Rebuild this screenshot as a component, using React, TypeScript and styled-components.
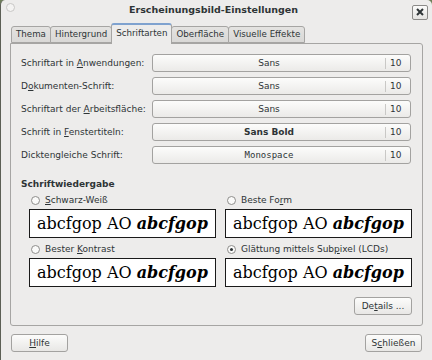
import styled, { createGlobalStyle } from 'styled-components'

const GlobalStyle = createGlobalStyle`
  html, body {
    margin: 0;
    padding: 0;
    background: #6f7f5a;
  }
  body {
    font-family: "DejaVu Sans", "Liberation Sans", sans-serif;
    font-size: 9px;
    color: #2e3436;
  }
`

const Window = styled.div`
  width: 432px;
  height: 360px;
  box-sizing: border-box;
  background: #edeceb;
  border-left: 1px solid #5c5f55;
  border-radius: 5px 5px 0 0;
  display: flex;
  flex-direction: column;
  overflow: hidden;
`

const TitleBar = styled.div`
  height: 21px;
  display: flex;
  align-items: center;
  padding: 0 4px 0 5px;
  flex-shrink: 0;
`

const Dot = styled.div`
  width: 7px;
  height: 7px;
  border-radius: 50%;
  border: 1px solid #c8c7c5;
  background: #f4f3f2;
  margin-top: -6px;
`

const Title = styled.div`
  flex: 1;
  text-align: center;
  font-weight: bold;
  font-size: 9.5px;
  color: #2e3436;
  margin-top: -3px;
`

const CloseButton = styled.div`
  width: 14px;
  height: 13px;
  border: 1px solid #8b8a88;
  border-radius: 2px;
  background: linear-gradient(#fbfbfa, #e4e3e1);
  display: flex;
  align-items: center;
  justify-content: center;
  margin-top: 3px;
`

const Content = styled.div`
  flex: 1;
  display: flex;
  flex-direction: column;
  padding: 0 9px 8px 9px;
`

const TabRow = styled.div`
  display: flex;
  align-items: flex-end;
  padding-left: 2px;
  height: 22px;
  position: relative;
  z-index: 1;
`

const Tab = styled.div<{ $active?: boolean }>`
  height: ${(p) => (p.$active ? '21px' : '17px')};
  box-sizing: border-box;
  padding: ${(p) => (p.$active ? '3px 4px 0' : '2px 4px 0')};
  border: 1px solid #a6a5a3;
  border-bottom: ${(p) => (p.$active ? 'none' : '1px solid #a6a5a3')};
  border-top: ${(p) => (p.$active ? '2px solid #7fa2cf' : '1px solid #a6a5a3')};
  border-radius: 3px 3px 0 0;
  margin-left: -1px;
  background: ${(p) => (p.$active ? '#edeceb' : 'linear-gradient(#e4e3e1, #d9d8d6)')};
  color: #2e3436;
  font-size: 8.7px;
  white-space: nowrap;
  margin-bottom: ${(p) => (p.$active ? '-1px' : '0')};
`

const Panel = styled.div`
  flex: 1;
  border: 1px solid #a6a5a3;
  border-radius: 0 3px 3px 3px;
  padding: 10px 10px 10px 10px;
  display: flex;
  flex-direction: column;
`

const FontGrid = styled.div`
  display: grid;
  grid-template-columns: 131px 1fr;
  row-gap: 5px;
  align-items: center;
`

const FieldLabel = styled.div`
  font-size: 9px;
`

const FontButton = styled.div`
  height: 18px;
  box-sizing: border-box;
  border: 1px solid #a3a2a0;
  border-radius: 3px;
  background: linear-gradient(#fcfcfb, #ebeae8);
  display: flex;
  align-items: center;
  margin-right: 1px;
`

const FontName = styled.div<{ $bold?: boolean; $mono?: boolean }>`
  flex: 1;
  text-align: center;
  font-weight: ${(p) => (p.$bold ? 'bold' : 'normal')};
  font-family: ${(p) => (p.$mono ? '"DejaVu Sans Mono", monospace' : 'inherit')};
`

const FontSize = styled.div`
  width: 20px;
  border-left: 1px solid #c9c8c6;
  padding-left: 4px;
  line-height: 11px;
`

const SectionTitle = styled.div`
  font-weight: bold;
  margin-top: 15px;
`

const RenderGrid = styled.div`
  display: grid;
  grid-template-columns: 1fr 1fr;
  column-gap: 9px;
  row-gap: 5px;
  padding-left: 8px;
  margin-top: 5px;
`

const Option = styled.div`
  display: flex;
  flex-direction: column;
  gap: 3px;
`

const RadioLine = styled.div`
  display: flex;
  align-items: center;
  gap: 5px;
  height: 12px;
  padding-left: 2px;
`

const Radio = styled.div<{ $checked?: boolean }>`
  width: 7px;
  height: 7px;
  border-radius: 50%;
  border: 1px solid #8e8d8b;
  background: #fafaf9;
  display: flex;
  align-items: center;
  justify-content: center;
  &::after {
    content: '';
    display: ${(p) => (p.$checked ? 'block' : 'none')};
    width: 3px;
    height: 3px;
    border-radius: 50%;
    background: #2e3436;
  }
`

const Preview = styled.div`
  height: 29px;
  box-sizing: border-box;
  border: 1px solid #1a1a1a;
  background: #ffffff;
  color: #000;
  font-family: "DejaVu Serif", serif;
  font-size: 16px;
  display: flex;
  align-items: center;
  justify-content: center;
  white-space: nowrap;
`

const Styled = styled.span`
  font-weight: bold;
  font-style: italic;
`

const DetailsRow = styled.div`
  display: flex;
  justify-content: flex-end;
  margin-top: 10px;
`

const Button = styled.div<{ $width: number }>`
  width: ${(p) => p.$width}px;
  height: 18px;
  box-sizing: border-box;
  border: 1px solid #a3a2a0;
  border-radius: 3px;
  background: linear-gradient(#fcfcfb, #e8e7e5);
  display: flex;
  align-items: center;
  justify-content: center;
`

const Footer = styled.div`
  display: flex;
  justify-content: space-between;
  margin-top: 8px;
  padding: 0 1px;
`

const fonts = [
  { label: <>Schriftart in <u>A</u>nwendungen:</>, name: 'Sans' },
  { label: <>D<u>o</u>kumenten-Schrift:</>, name: 'Sans' },
  { label: <>Schriftart der <u>A</u>rbeitsfläche:</>, name: 'Sans' },
  { label: <>Schrift in <u>F</u>enstertiteln:</>, name: 'Sans Bold', bold: true },
  { label: <>Dicktengleiche Schrift:</>, name: 'Monospace', mono: true },
]

const modes = [
  { label: <><u>S</u>chwarz-Weiß</> },
  { label: <>Beste Fo<u>r</u>m</> },
  { label: <>Bester <u>K</u>ontrast</> },
  { label: <>Glättung mittels Sub<u>p</u>ixel (LCDs)</>, checked: true },
]

export default function App() {
  return (
    <>
      <GlobalStyle />
      <Window>
        <TitleBar>
          <Dot />
          <Title>Erscheinungsbild-Einstellungen</Title>
          <CloseButton>
            <svg width="8" height="8" viewBox="0 0 8 8">
              <path d="M1 1L7 7M7 1L1 7" stroke="#2e3436" strokeWidth="2" />
            </svg>
          </CloseButton>
        </TitleBar>
        <Content>
          <TabRow>
            <Tab>Thema</Tab>
            <Tab>Hintergrund</Tab>
            <Tab $active>Schriftarten</Tab>
            <Tab>Oberfläche</Tab>
            <Tab>Visuelle Effekte</Tab>
          </TabRow>
          <Panel>
            <FontGrid>
              {fonts.map((f, i) => (
                <>
                  <FieldLabel key={'l' + i}>{f.label}</FieldLabel>
                  <FontButton key={'b' + i}>
                    <FontName $bold={f.bold} $mono={f.mono}>{f.name}</FontName>
                    <FontSize>10</FontSize>
                  </FontButton>
                </>
              ))}
            </FontGrid>
            <SectionTitle>Schriftwiedergabe</SectionTitle>
            <RenderGrid>
              {modes.map((m, i) => (
                <Option key={i}>
                  <RadioLine>
                    <Radio $checked={m.checked} />
                    <span>{m.label}</span>
                  </RadioLine>
                  <Preview>
                    abcfgop AO&nbsp;<Styled>abcfgop</Styled>
                  </Preview>
                </Option>
              ))}
            </RenderGrid>
            <DetailsRow>
              <Button $width={58}>De<u>t</u>ails ...</Button>
            </DetailsRow>
          </Panel>
          <Footer>
            <Button $width={57}><u>H</u>ilfe</Button>
            <Button $width={57}>S<u>c</u>hließen</Button>
          </Footer>
        </Content>
      </Window>
    </>
  )
}
